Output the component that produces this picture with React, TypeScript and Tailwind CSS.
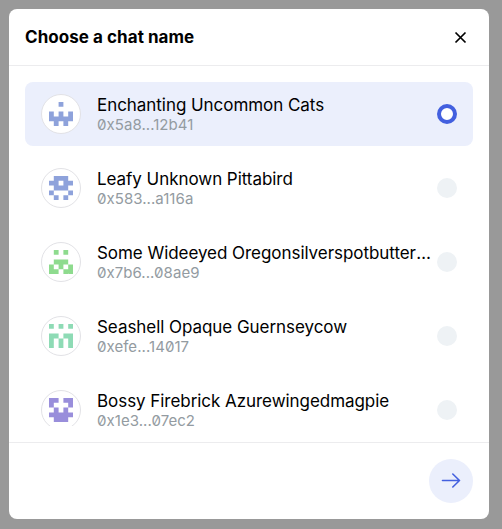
type ChatName = { name: string; address: string; color: string; cells: string[] };

const names: ChatName[] = [
  { name: "Enchanting Uncommon Cats", address: "0x5a8...12b41", color: "#8ea2db", cells: ["..X..", ".....", "X.X.X", "XXXXX", ".X.X."] },
  { name: "Leafy Unknown Pittabird", address: "0x583...a116a", color: "#8ea2db", cells: [".XXX.", "XX.XX", ".XXX.", "X...X", ".X.X."] },
  { name: "Some Wideeyed Oregonsilverspotbutterfly", address: "0x7b6...08ae9", color: "#8edb8e", cells: [".X.X.", ".....", ".XXX.", "X.X.X", "XX.XX"] },
  { name: "Seashell Opaque Guernseycow", address: "0xefe...14017", color: "#8edbb5", cells: ["X.X.X", ".....", "XX.XX", "X.X.X", "X.X.X"] },
  { name: "Bossy Firebrick Azurewingedmagpie", address: "0x1e3...07ec2", color: "#998edb", cells: ["XX.XX", "X...X", ".X.X.", "XXXXX", ".XXX."] },
];

function Identicon({ cells, color }: { cells: string[]; color: string }) {
  const path = cells
    .flatMap((row, y) => row.split("").map((cell, x) => (cell === "X" ? `M${x} ${y}h1v1h-1z` : "")))
    .join("");
  return (
    <div className="flex size-10 shrink-0 items-center justify-center rounded-full border border-[#e2e2e6] bg-white">
      <svg width="24" height="24" viewBox="0 0 5 5" fill={color}>
        <path d={path} />
      </svg>
    </div>
  );
}

export default function App() {
  return (
    <div className="h-screen overflow-hidden bg-[#999999] pt-[9px] pl-[9px] font-['Inter',sans-serif] text-black [font-optical-sizing:none]">
      <div className="flex h-[510px] w-[480px] flex-col rounded-lg bg-white">
        <header className="flex h-[57px] shrink-0 items-center justify-between border-b border-[#ececee] pr-[22px] pl-4">
          <h1 className="text-[17px] leading-6 font-bold tracking-[0.05px]">Choose a chat name</h1>
          <button aria-label="Close">
            <svg width="13" height="13" viewBox="0 0 13 13" fill="none" stroke="currentColor" strokeWidth="1.7">
              <path d="M1.5 1.5 11.5 11.5M11.5 1.5 1.5 11.5" />
            </svg>
          </button>
        </header>
        <div className="h-[376px] shrink-0 px-4 py-4">
          <div className="flex h-[344px] flex-col gap-2.5 overflow-hidden">
            {names.map((item, index) => (
              <div
                key={item.address}
                className={`flex h-16 shrink-0 items-center rounded-lg px-4 ${index === 0 ? "bg-[#ebeffc]" : "bg-white"}`}
              >
                <Identicon cells={item.cells} color={item.color} />
                <div className="ml-4 w-[336px] shrink-0 pb-px">
                  <div className="truncate text-[17px] leading-[22px] tracking-[-0.05px]">{item.name}</div>
                  <div className="text-[15px] leading-[17px] tracking-[0.05px] text-[#939ba1] [font-feature-settings:'zero']">{item.address}</div>
                </div>
                <div
                  className={`ml-1 size-5 shrink-0 rounded-full ${index === 0 ? "border-4 border-[#4360df] bg-white" : "bg-[#eef2f5]"}`}
                />
              </div>
            ))}
          </div>
        </div>
        <footer className="flex flex-1 items-center justify-end border-t border-[#ececee] px-4">
          <button aria-label="Continue" className="flex size-11 items-center justify-center rounded-full bg-[#ebeffc] text-[#4360df]">
            <svg width="20" height="16" viewBox="0 0 20 16" fill="none" stroke="currentColor" strokeWidth="1.6" strokeLinecap="round" strokeLinejoin="round">
              <path d="M1.5 7.5H18.5M11.8 1 18.5 7.5 11.8 14" />
            </svg>
          </button>
        </footer>
      </div>
    </div>
  );
}
